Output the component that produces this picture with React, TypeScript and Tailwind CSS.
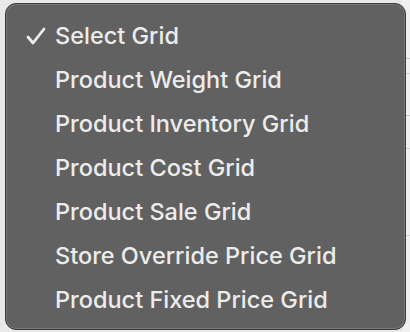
import React from "react";

const items = [
  "Select Grid",
  "Product Weight Grid",
  "Product Inventory Grid",
  "Product Cost Grid",
  "Product Sale Grid",
  "Store Override Price Grid",
  "Product Fixed Price Grid",
];

export default function App() {
  return (
    <div className="relative w-[410px] h-[332px] overflow-hidden bg-[#e9e9e9]">
      <div className="absolute right-0 top-0 w-[8px] h-full bg-[#f0f0f0]">
        <div className="mt-[58px] h-px bg-[#c8c8c8]" />
        <div className="mt-[14px] h-px bg-[#d0d0d0]" />
        <div className="mt-[41px] h-px bg-[#c8c8c8]" />
        <div className="mt-[32px] h-px bg-[#d0d0d0]" />
        <div className="mt-[86px] h-px bg-[#d0d0d0]" />
        <div className="mt-[26px] h-[16px] w-[3px] bg-[#555]" />
      </div>
      <div
        className="absolute left-[5px] top-[3px] w-[401px] h-[327px] rounded-[11px] border border-[#3c3c3c] bg-[#616161] shadow-[inset_0_0_0_1px_#777]"
        style={{ fontFamily: "Inter, 'Noto Sans', sans-serif" }}
      >
        <div className="flex flex-col pt-[10px]">
          {items.map((t, i) => (
            <div key={t} className="flex items-center h-[44px] text-[23.5px] font-[450] text-[#ececec] leading-none">
              <div className="w-[49px] flex justify-start pl-[20px]">
                {i === 0 && (
                  <svg width="20" height="18" viewBox="0 0 20 18">
                    <path d="M2 10 L7 16 L18 2" fill="none" stroke="#ececec" strokeWidth="2.8" strokeLinecap="round" strokeLinejoin="round" />
                  </svg>
                )}
              </div>
              <span>{t}</span>
            </div>
          ))}
        </div>
      </div>
    </div>
  );
}
